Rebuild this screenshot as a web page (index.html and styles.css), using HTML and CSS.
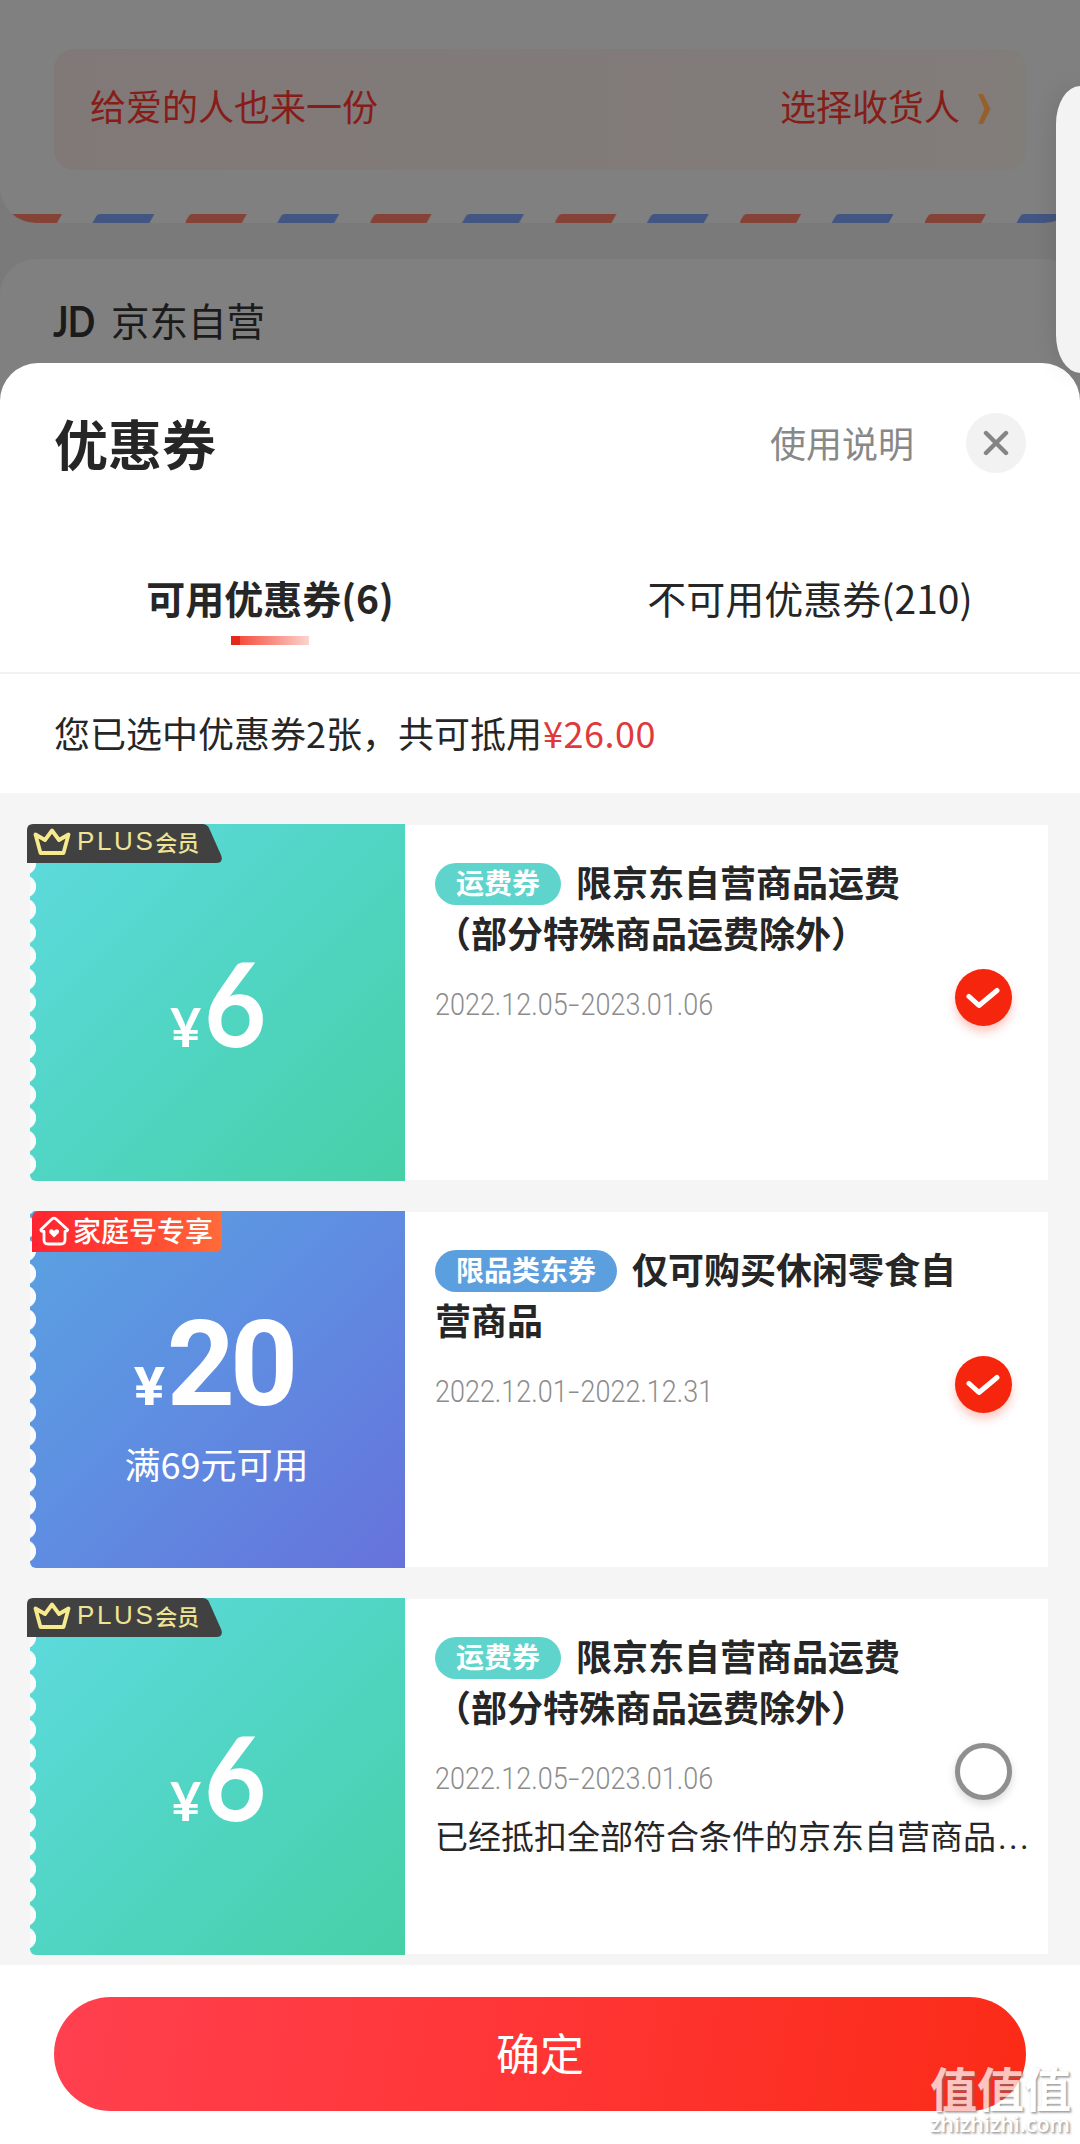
FILE: index.html
```html
<!DOCTYPE html>
<html lang="zh-CN">
<head>
<meta charset="utf-8">
<title>优惠券</title>
<link rel="stylesheet" href="styles.css">
</head>
<body>
<div class="backdrop">
  <section class="address">
    <div class="gift">
      <span>给爱的人也来一份</span>
      <span class="gift-pick">选择收货人
        <svg width="14" height="32" viewBox="0 0 14 32"><path d="M1 1H6L13.5 16L6 31H1L7.5 16Z" fill="#96602b"/></svg>
      </span>
    </div>
    <svg class="airmail" width="1080" height="9" viewBox="0 0 1080 9">
      <defs>
        <pattern id="mail" x="1" y="0" width="184.8" height="9" patternUnits="userSpaceOnUse">
          <path d="M-1 9L3 2Q4 0 7 0H61L56 9Z" fill="#854338"/>
          <path d="M91.4 9L95.4 2Q96.4 0 99.4 0H153.4L148.4 9Z" fill="#435581"/>
        </pattern>
      </defs>
      <rect width="1080" height="9" fill="url(#mail)"/>
    </svg>
  </section>
  <section class="shop"><b class="jd">JD</b><span>京东自营</span></section>
</div>

<main class="sheet">
  <header class="head">
    <h1>优惠券</h1>
    <a class="help">使用说明</a>
    <span class="close"><svg width="26" height="26" viewBox="0 0 26 26"><path d="M3 3L23 23M23 3L3 23" stroke="#858585" stroke-width="4.4" stroke-linecap="round"/></svg></span>
  </header>
  <nav class="tabs">
    <span class="tab tab-on">可用优惠券(6)</span>
    <span class="tab">不可用优惠券(210)</span>
  </nav>
  <p class="summary">您已选中优惠券2张，共可抵用<span class="red">¥26.00</span></p>

  <div class="list">
    <article class="coupon">
      <div class="face teal">
        <div class="amount slim"><span class="yen">¥</span><span class="num">6</span></div>
        <div class="plus">
          <svg class="plus-bg" width="195" height="39" viewBox="0 0 195 39"><path d="M0 39V6Q0 0 6 0H175Q180 0 182 4L194 31Q197 39 189 39Z" fill="#414141"/></svg>
          <svg class="crown" width="38" height="28" viewBox="0 0 38 28"><path d="M2.500 6.500L7.500 25H30.500L35.500 6.500L26 12L19 2.500L12 12Z" fill="none" stroke="#f6ea8c" stroke-width="3.800" stroke-linejoin="round"/></svg>
          <span class="plus-en">PLUS</span><span class="plus-zh">会员</span>
        </div>
      </div>
      <div class="info">
        <h2><span class="pill pill-teal">运费券</span>限京东自营商品运费<br>（部分特殊商品运费除外）</h2>
        <p class="date"><span>2022.12.05</span><i>-</i><span>2023.01.06</span></p>
      </div>
      <span class="pick on"><svg width="34" height="22" viewBox="0 0 34 22"><path d="M3 9.500L13 18.500L31 3.500" fill="none" stroke="#fff" stroke-width="5" stroke-linecap="round" stroke-linejoin="round"/></svg></span>
    </article>

    <article class="coupon">
      <div class="face blue">
        <div class="amount"><span class="yen">¥</span><span class="num">20</span></div>
        <p class="cond">满69元可用</p>
        <div class="family">
          <svg width="32" height="30" viewBox="0 0 32 30"><path d="M3 13.500L14 3Q16 1.200 18 3L29.500 13.500Q30 15 27 15.500V24Q27 28 23 28H10Q6 28 6 24V15.500Q2.500 15.500 3 13.500Z" fill="none" stroke="#fff" stroke-width="2.800" stroke-linejoin="round"/><path d="M16 21.500L11.500 17Q10.500 14 13 13.200Q15 13 16 15Q17 13 19.200 13.200Q21.800 14 20.700 17Z" fill="#fff"/></svg>
          <span>家庭号专享</span>
        </div>
      </div>
      <div class="info">
        <h2><span class="pill pill-blue">限品类东券</span>仅可购买休闲零食自<br>营商品</h2>
        <p class="date"><span>2022.12.01</span><i>-</i><span>2022.12.31</span></p>
      </div>
      <span class="pick on"><svg width="34" height="22" viewBox="0 0 34 22"><path d="M3 9.500L13 18.500L31 3.500" fill="none" stroke="#fff" stroke-width="5" stroke-linecap="round" stroke-linejoin="round"/></svg></span>
    </article>

    <article class="coupon">
      <div class="face teal">
        <div class="amount slim"><span class="yen">¥</span><span class="num">6</span></div>
        <div class="plus">
          <svg class="plus-bg" width="195" height="39" viewBox="0 0 195 39"><path d="M0 39V6Q0 0 6 0H175Q180 0 182 4L194 31Q197 39 189 39Z" fill="#414141"/></svg>
          <svg class="crown" width="38" height="28" viewBox="0 0 38 28"><path d="M2.500 6.500L7.500 25H30.500L35.500 6.500L26 12L19 2.500L12 12Z" fill="none" stroke="#f6ea8c" stroke-width="3.800" stroke-linejoin="round"/></svg>
          <span class="plus-en">PLUS</span><span class="plus-zh">会员</span>
        </div>
      </div>
      <div class="info">
        <h2><span class="pill pill-teal">运费券</span>限京东自营商品运费<br>（部分特殊商品运费除外）</h2>
        <p class="date"><span>2022.12.05</span><i>-</i><span>2023.01.06</span></p>
        <p class="note">已经抵扣全部符合条件的京东自营商品<span class="dots">...</span></p>
      </div>
      <span class="pick"></span>
    </article>
  </div>

  <footer class="foot"><button class="confirm">确定</button></footer>
</main>

<div class="side-handle"></div>
<div class="watermark"><span class="wm-zh">值值值</span><span class="wm-url">zhizhizhi.com</span></div>
</body>
</html>
```
FILE: styles.css
```css
* { box-sizing: border-box; margin: 0; padding: 0; }

body {
  position: relative;
  width: 1080px;
  height: 2144px;
  overflow: hidden;
  background: #7a7a7a;
  color: #262626;
  font-family: "Noto Sans CJK SC", sans-serif;
}

svg { display: block; }

/* dimmed page behind the sheet */
.backdrop { display: flex; flex-direction: column; gap: 36px; height: 423px; }

.address {
  display: flex;
  flex-direction: column;
  justify-content: space-between;
  height: 223px;
  padding-top: 49px;
  background: #808080;
  border-radius: 0 0 36px 36px;
  overflow: hidden;
}

.gift {
  display: flex;
  align-items: center;
  justify-content: space-between;
  height: 121px;
  margin: 0 54px;
  padding: 0 35px 9px 36px;
  border-radius: 20px;
  background: linear-gradient(90deg, #807978, #817b7a 70%, #817d79);
  color: #861d18;
  font-size: 36px;
  line-height: 52px;
}

.gift-pick { display: flex; align-items: center; gap: 17px; }
.gift-pick svg { margin-top: 7px; }

.shop {
  display: flex;
  flex: 1;
  gap: 17px;
  padding: 32px 53px 0;
  border-radius: 36px 36px 0 0;
  background: #808080;
  color: #1b1b1b;
  font-size: 38.5px;
  line-height: 56px;
}

.jd {
  width: 41px;
  font-family: Lato, sans-serif;
  font-size: 42px;
  line-height: 61px;
  letter-spacing: -1px;
  transform: scaleX(0.86);
  transform-origin: left;
}

/* bottom sheet */
.sheet {
  position: relative;
  display: flex;
  flex-direction: column;
  height: 1781px;
  margin-top: -60px;
  border-radius: 38px 38px 0 0;
  background: #fff;
}

.head {
  display: flex;
  align-items: center;
  height: 160px;
  padding: 0 54px;
}

.head h1 { flex: 1; font-size: 54px; line-height: 78px; }
.help { margin: -2px 52px 0 0; color: #888; font-size: 36px; line-height: 52px; }

.close {
  display: flex;
  align-items: center;
  justify-content: center;
  width: 60px;
  height: 60px;
  border-radius: 50%;
  background: #f2f2f2;
}

.tabs { display: flex; height: 151px; border-bottom: 2px solid #f1f1f1; }

.tab {
  position: relative;
  flex: 1;
  text-align: center;
  font-size: 39px;
  line-height: 149px;
}

.tab-on { font-weight: 700; }

.tab-on::after {
  content: "";
  position: absolute;
  left: 231px;
  top: 113px;
  width: 78px;
  height: 9px;
  background: linear-gradient(90deg, #e22a1c 11%, #f5503f 12%, #fad4d0);
}

.summary { height: 119px; padding-left: 54px; font-size: 36px; line-height: 117px; }
.red { margin-left: 1px; color: #e0393b; letter-spacing: .5px; }

.list {
  display: flex;
  flex-direction: column;
  gap: 30px;
  height: 1172px;
  padding: 31px 32px 0 30px;
  background: #f5f5f5;
}

.coupon { position: relative; display: flex; height: 357px; }

.face {
  position: relative;
  display: flex;
  flex-direction: column;
  align-items: center;
  width: 375px;
  padding-top: 128px;
  border-radius: 0 0 0 6px;
  color: #fff;
}

.teal { background: linear-gradient(135deg, #5edade, #50d5c3 50%, #47d0a7); }
.blue { padding-top: 104px; background: linear-gradient(135deg, #5aa2e1, #5f8ce1 50%, #6672db); }

/* perforated left edge */
.face::before {
  content: "";
  position: absolute;
  left: 0;
  top: 0;
  width: 7px;
  height: 352px;
  background: radial-gradient(circle at -5px 11.570px, #fbfbfb 10.700px, transparent 11.500px) 0 4.700px / 7px 23.150px;
}

.amount {
  display: flex;
  align-items: baseline;
  height: 100px;
  margin-right: 7px;
  font-family: Roboto, sans-serif;
  font-weight: 700;
  line-height: 100px;
}

.amount .num { font-size: 119px; letter-spacing: -5px; }
.amount .yen { margin-right: 3px; font-size: 54px; transform: scaleX(1.080); }
.slim { margin-right: -2px; font-family: Lato, sans-serif; }
.slim .num { font-size: 117px; transform: scaleX(0.92); transform-origin: left; }
.slim .yen { transform: none; }

.cond { margin: 22px 2px 0 0; font-size: 36px; line-height: 52px; }

.plus {
  position: absolute;
  left: -3px;
  top: 0;
  display: flex;
  align-items: center;
  width: 195px;
  height: 39px;
  padding: 0 0 4px 6px;
  color: #efe494;
}

.plus-bg { position: absolute; left: 0; top: 0; }
.crown { position: relative; }
.plus-en { position: relative; margin-left: 6px; font: 400 26px/39px "Liberation Sans", sans-serif; letter-spacing: 2.600px; }
.plus-zh { position: relative; margin-top: -2px; font-size: 22px; font-weight: 500; line-height: 34px; }

.family {
  position: absolute;
  left: 2px;
  top: 0;
  display: flex;
  align-items: center;
  gap: 3px;
  width: 190px;
  height: 41px;
  padding-left: 6px;
  border-radius: 7px 0 7px 0;
  background: linear-gradient(90deg, #ff2431, #ff4430 55%, #ff6c3a);
  font-size: 28px;
  font-weight: 500;
  line-height: 38px;
}

.family span { margin-top: -4px; }
.family svg { margin-top: -2px; }

.info { flex: 1; height: 355px; margin-top: 1px; padding: 31px 0 0 30px; background: #fff; }
.info h2 { font-size: 36px; line-height: 51px; white-space: nowrap; }

.pill {
  display: inline-block;
  height: 42px;
  margin-right: 15px;
  padding: 0 21px;
  border-radius: 21px;
  color: #fff;
  font-size: 28px;
  line-height: 39px;
  vertical-align: 3px;
}

.pill-teal { background: #5fd4cc; }
.pill-blue { background: #5b9fdf; }

.date {
  display: flex;
  margin-top: 22px;
  width: 322px;
  color: #8c8c8c;
  font: 300 31px/50px Roboto, sans-serif;
  transform: scaleX(0.87);
  transform-origin: left;
}

.date i { margin: 0 3px; font-style: normal; transform: scaleX(1.500); }

.note { margin-top: 7px; font-size: 33px; line-height: 48px; white-space: nowrap; }
.dots { padding-left: 2px; font-family: Roboto, sans-serif; letter-spacing: 2.300px; }

.pick {
  position: absolute;
  left: 924.500px;
  top: 145px;
  display: flex;
  align-items: center;
  justify-content: center;
  width: 57px;
  height: 57px;
  border: 5px solid #8f8f8f;
  border-radius: 50%;
  background: #fff;
  box-shadow: 0 4px 8px rgba(0, 0, 0, .15);
}

.pick.on { border: 0; background: #f5260d; box-shadow: 0 6px 10px rgba(245, 38, 13, .25); }

.foot { height: 179px; padding: 32px 54px; background: #fff; }

.confirm {
  display: block;
  width: 972px;
  height: 114px;
  padding-bottom: 5px;
  border: 0;
  border-radius: 57px;
  background: linear-gradient(100deg, #ff404f, #ff3535 50%, #fb2b17);
  color: #fff;
  font: 400 44px/64px "Noto Sans CJK SC", sans-serif;
}

/* system edge panel handle */
.side-handle {
  position: absolute;
  right: 0;
  top: 86px;
  width: 24px;
  height: 287px;
  border-radius: 24px 0 0 24px / 38px 0 0 38px;
  background: #f3f3f3;
  box-shadow: 0 0 24px rgba(0, 0, 0, .12);
}

.watermark {
  position: absolute;
  left: 930px;
  top: 2061px;
  display: flex;
  flex-direction: column;
  color: #fff;
  opacity: .72;
  text-shadow: 1px 1px 2px #777, 2px 2px 2px rgba(110, 110, 110, .5);
}

.wm-zh { font-size: 47px; font-weight: 700; line-height: 51px; }
.wm-url { font: 600 21.500px/24px "Open Sans", sans-serif; }
```
